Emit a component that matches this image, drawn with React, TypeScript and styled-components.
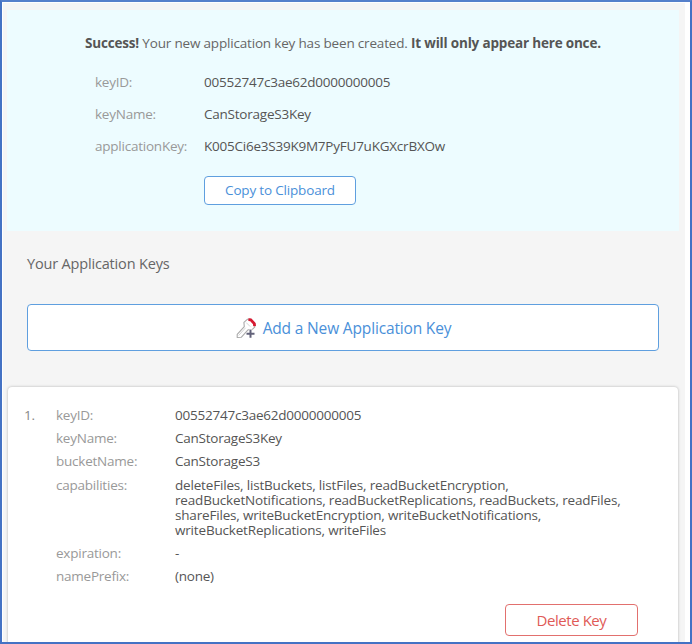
import React from "react";
import styled, { createGlobalStyle } from "styled-components";

const GlobalStyle = createGlobalStyle`
  * { box-sizing: border-box; }
  body {
    margin: 0;
    overflow: hidden;
    font-family: "Open Sans", sans-serif;
    font-size: 13.5px;
    letter-spacing: -0.23px;
    color: #555;
  }
`;

const Frame = styled.div`
  width: 692px;
  height: 644px;
  border: 2px solid #4472c4;
  border-top-color: #5580cb;
  background: #fff;
  padding: 1px 5px 0 1px;
  overflow: hidden;
`;

const Page = styled.main`
  height: 639px;
  background: #f5f5f5;
  padding: 7px 6px 0 4px;
  overflow: hidden;
`;

const Notice = styled.section`
  height: 221px;
  background: #edfcff;
  padding-top: 23px;
`;

const Message = styled.p`
  margin: 0;
  padding-left: 78px;
  line-height: 20px;
  white-space: nowrap;
  letter-spacing: -0.18px;
  color: #666;
  b { color: #555; }
`;

const NoticeGrid = styled.dl`
  display: grid;
  grid-template-columns: 109px 1fr;
  grid-auto-rows: 32.2px;
  margin: 13px 0 0 88px;
  line-height: 32px;
`;

const Label = styled.dt`
  color: #999;
`;

const Value = styled.dd`
  margin: 0;
  white-space: nowrap;
  color: #555;
`;

const Button = styled.button<{ $w: number; $h: number; $size: number; $track: number; $drop?: number; $danger?: boolean }>`
  display: flex;
  align-items: center;
  justify-content: center;
  width: ${(p) => p.$w}px;
  height: ${(p) => p.$h}px;
  padding: ${(p) => p.$drop ?? 0}px 0 1px;
  font-family: inherit;
  font-size: ${(p) => p.$size}px;
  letter-spacing: ${(p) => p.$track}px;
  color: ${(p) => (p.$danger ? "#e05a57" : "#4a90d9")};
  border: 1px solid ${(p) => (p.$danger ? "#e2706e" : "#5f9fdf")};
  border-radius: 4px;
  background: #fff;
`;

const CopyRow = styled.div`
  margin: 13px 0 0 197px;
`;

const Heading = styled.h2`
  margin: 22px 0 30px 20px;
  font-size: 14.5px;
  letter-spacing: -0.17px;
  font-weight: 400;
  line-height: 21px;
  color: #666;
`;

const AddRow = styled.div`
  margin: 0 0 36px 20px;
  svg { margin: 0 6px 0 1px; }
`;

const Card = styled.article`
  height: 300px;
  margin: 0 1px;
  padding: 17px 40px 0 16px;
  background: #fff;
  border-radius: 4px;
  box-shadow: 0 0 3px rgba(0, 0, 0, 0.28);
`;

const CardBody = styled.div`
  display: grid;
  grid-template-columns: 32px 1fr;
  line-height: 23px;
`;

const Index = styled.span`
  color: #888;
`;

const Details = styled.dl`
  display: grid;
  grid-template-columns: 119px 1fr;
  grid-template-rows: 23.4px 23px 23.4px 68.2px 23.4px 23.4px;
  margin: 0;
`;

const Capabilities = styled(Value)`
  padding-top: 4.2px;
  line-height: 15px;
  letter-spacing: -0.18px;
`;

const Actions = styled.div`
  display: flex;
  justify-content: flex-end;
  margin-top: 15px;
`;

const KeyIcon = () => (
  <svg width="21" height="21" viewBox="0 0 21 21" fill="none">
    <path d="M8.3 8.6 7.9 4.4 11.6 1.2 14 1 18.9 6 18.7 9.2 15.8 11.8 12 11.8 5.2 19.3 1.2 19.5 1.2 16.4Z" fill="#fff" stroke="#aaa" strokeWidth="1.1" strokeLinejoin="round" />
    <path d="m9.6 9.8-7 7.7M10.2 4.6l4 4" stroke="#d5d5d5" />
    <path d="m12.4 1.7 2.4.1 3.5 3.8.3 2.6" stroke="#d71931" strokeWidth="2.8" />
    <path d="M14.8 11.6v8.4M10.8 15.8H19" stroke="#fff" strokeWidth="3.2" />
    <path d="M14.5 11.8v8M10.5 15.8h8" stroke="#62627a" strokeWidth="2" />
  </svg>
);

const capabilityLines = [
  "deleteFiles, listBuckets, listFiles, readBucketEncryption,",
  "readBucketNotifications, readBucketReplications, readBuckets, readFiles,",
  "shareFiles, writeBucketEncryption, writeBucketNotifications,",
  "writeBucketReplications, writeFiles",
];

export default function App() {
  return (
    <Frame>
      <GlobalStyle />
      <Page>
        <Notice>
          <Message>
            <b>Success!</b> Your new application key has been created. <b>It will only appear here once.</b>
          </Message>
          <NoticeGrid>
            <Label>keyID:</Label>
            <Value>00552747c3ae62d0000000005</Value>
            <Label>keyName:</Label>
            <Value>CanStorageS3Key</Value>
            <Label>applicationKey:</Label>
            <Value>K005Ci6e3S39K9M7PyFU7uKGXcrBXOw</Value>
          </NoticeGrid>
          <CopyRow>
            <Button $w={152} $h={29} $size={13.5} $track={-0.18}>Copy to Clipboard</Button>
          </CopyRow>
        </Notice>
        <Heading>Your Application Keys</Heading>
        <AddRow>
          <Button $w={632} $h={47} $size={15.5} $track={-0.16} $drop={2}>
            <KeyIcon />
            Add a New Application Key
          </Button>
        </AddRow>
        <Card>
          <CardBody>
            <Index>1.</Index>
            <Details>
              <Label>keyID:</Label>
              <Value>00552747c3ae62d0000000005</Value>
              <Label>keyName:</Label>
              <Value>CanStorageS3Key</Value>
              <Label>bucketName:</Label>
              <Value>CanStorageS3</Value>
              <Label>capabilities:</Label>
              <Capabilities>
                {capabilityLines.map((line) => (
                  <div key={line}>{line}</div>
                ))}
              </Capabilities>
              <Label>expiration:</Label>
              <Value>-</Value>
              <Label>namePrefix:</Label>
              <Value>(none)</Value>
            </Details>
          </CardBody>
          <Actions>
            <Button $w={133} $h={32} $size={15} $track={-0.45} $drop={1} $danger>Delete Key</Button>
          </Actions>
        </Card>
      </Page>
    </Frame>
  );
}
